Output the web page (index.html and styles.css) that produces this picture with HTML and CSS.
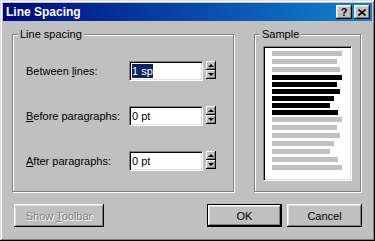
FILE: index.html
```html
<!DOCTYPE html>
<html lang="en">

<head>
    <meta charset="UTF-8">
    <title>Line Spacing</title>
    <link rel="stylesheet" href="styles.css">
</head>

<body>
    <div class="window">
        <div class="titlebar">
            <span class="title">Line Spacing</span>
            <div class="title-buttons">
                <button class="tbtn help">?</button>
                <button class="tbtn close">
                    <svg width="8" height="7" viewBox="0 0 8 7">
                        <path d="M0.5 0.5 L7.5 6.5 M7.5 0.5 L0.5 6.5" stroke="#000" stroke-width="1.6" fill="none" />
                    </svg>
                </button>
            </div>
        </div>

        <div class="content">
            <div class="groups">
                <div class="group spacing">
                    <span class="group-label">Line spacing</span>

                    <div class="field">
                        <label>Between <u>l</u>ines:</label>
                        <div class="input"><span class="selected">1 sp</span></div>
                        <div class="spinner"><span class="spin up"></span><span class="spin down"></span></div>
                    </div>

                    <div class="field">
                        <label><u>B</u>efore paragraphs:</label>
                        <div class="input">0 pt</div>
                        <div class="spinner"><span class="spin up"></span><span class="spin down"></span></div>
                    </div>

                    <div class="field">
                        <label><u>A</u>fter paragraphs:</label>
                        <div class="input">0 pt</div>
                        <div class="spinner"><span class="spin up"></span><span class="spin down"></span></div>
                    </div>
                </div>

                <div class="group sample">
                    <span class="group-label">Sample</span>
                    <div class="paper">
                        <div class="ln w1"></div>
                        <div class="ln w2"></div>
                        <div class="ln w3"></div>
                        <div class="ln dark w1"></div>
                        <div class="ln dark w2"></div>
                        <div class="ln dark w3"></div>
                        <div class="ln dark w4"></div>
                        <div class="ln dark w5"></div>
                        <div class="ln dark w6"></div>
                        <div class="ln w1"></div>
                        <div class="ln w2"></div>
                        <div class="ln w3"></div>
                        <div class="ln w4"></div>
                        <div class="ln w5"></div>
                        <div class="ln w6"></div>
                        <div class="ln w1"></div>
                    </div>
                </div>
            </div>

            <div class="actions">
                <button class="btn wide disabled">Show <u>T</u>oolbar</button>
                <div class="right-buttons">
                    <button class="btn default">OK</button>
                    <button class="btn">Cancel</button>
                </div>
            </div>
        </div>
    </div>
</body>

</html>
```

FILE: styles.css
```css
* {
    box-sizing: border-box;
    margin: 0;
    padding: 0;
}

body {
    font-family: 'Liberation Sans', Arial, sans-serif;
    font-size: 11px;
    color: #000;
    background-color: #c0c0c0;
}

.window {
    width: 375px;
    height: 241px;
    padding: 3px;
    background-color: #c0c0c0;
    box-shadow: inset -1px -1px #000, inset 1px 1px #dfdfdf,
        inset -2px -2px #808080, inset 2px 2px #fff;
}

.titlebar {
    height: 18px;
    display: flex;
    align-items: center;
    justify-content: space-between;
    padding: 0 2px 0 3px;
    background: linear-gradient(to right, #000a80, #1084d0);
    color: #fff;
}

.title {
    font-weight: bold;
    font-size: 12px;
}

.title-buttons {
    display: flex;
    gap: 2px;
}

.tbtn {
    width: 16px;
    height: 14px;
    border: none;
    background-color: #c0c0c0;
    display: flex;
    align-items: center;
    justify-content: center;
    font: bold 11px 'Liberation Sans', Arial, sans-serif;
    color: #000;
    box-shadow: inset -1px -1px #000, inset 1px 1px #fff,
        inset -2px -2px #808080, inset 2px 2px #dfdfdf;
}

.content {
    padding: 13px 11px 0 9px;
}

.groups {
    display: flex;
    justify-content: space-between;
}

.group {
    position: relative;
    height: 158px;
    border: 1px solid #808080;
    box-shadow: inset 1px 1px #fff, 1px 1px #fff;
}

.group-label {
    position: absolute;
    top: -7px;
    left: 5px;
    padding: 0 2px;
    line-height: 13px;
    background-color: #c0c0c0;
}

.spacing {
    width: 222px;
    padding: 26px 0 0 13px;
    display: flex;
    flex-direction: column;
    gap: 25px;
}

.field {
    display: flex;
    align-items: center;
    height: 20px;
}

.field label {
    width: 103px;
}

.input {
    width: 74px;
    height: 20px;
    padding: 0 2px;
    display: flex;
    align-items: center;
    background-color: #fff;
    border: 1px solid;
    border-color: #808080 #fff #fff #808080;
    box-shadow: inset 1px 1px #000, inset -1px -1px #dfdfdf;
}

.selected {
    background-color: #0a246a;
    color: #fff;
    line-height: 14px;
}

.spinner {
    align-self: flex-start;
    margin-left: 3px;
    width: 10px;
    height: 18px;
    display: flex;
    flex-direction: column;
}

.spin {
    position: relative;
    flex: 1;
    background-color: #c0c0c0;
    box-shadow: inset -1px -1px #000, inset 1px 1px #fff,
        inset -2px -2px #808080;
}

.spin::after {
    content: '';
    position: absolute;
    left: 2px;
    border-left: 3px solid transparent;
    border-right: 3px solid transparent;
}

.up::after {
    top: 3px;
    border-bottom: 3px solid #000;
}

.down::after {
    top: 3px;
    border-top: 3px solid #000;
}

.sample {
    width: 107px;
    padding: 11px 8px 0 8px;
}

.paper {
    height: 135px;
    padding: 4px 0 0 8px;
    background-color: #fff;
    border: 1px solid;
    border-color: #808080 #fff #fff #808080;
    box-shadow: inset 1px 1px #000, inset -1px -1px #dfdfdf;
}

.ln {
    height: 5px;
    margin-bottom: 3px;
    background-color: #c0c0c0;
}

.ln.dark {
    margin-bottom: 2px;
    background-color: #000;
}

.w1 { width: 70px; }
.w2 { width: 65px; }
.w3 { width: 68px; }
.w4 { width: 62px; }
.w5 { width: 58px; }
.w6 { width: 66px; }

.actions {
    display: flex;
    justify-content: space-between;
    margin: 12px -1px 0 2px;
}

.right-buttons {
    display: flex;
    gap: 5px;
}

.btn {
    width: 75px;
    height: 23px;
    border: none;
    background-color: #c0c0c0;
    font: 11px 'Liberation Sans', Arial, sans-serif;
    color: #000;
    box-shadow: inset -1px -1px #000, inset 1px 1px #fff,
        inset -2px -2px #808080, inset 2px 2px #dfdfdf;
}

.btn.wide {
    width: 90px;
}

.btn.disabled {
    color: #808080;
    text-shadow: 1px 1px #fff;
}

.btn.default {
    border: 1px solid #000;
    box-shadow: inset -1px -1px #000, inset 1px 1px #fff,
        inset -2px -2px #808080, inset 2px 2px #dfdfdf;
}
```
